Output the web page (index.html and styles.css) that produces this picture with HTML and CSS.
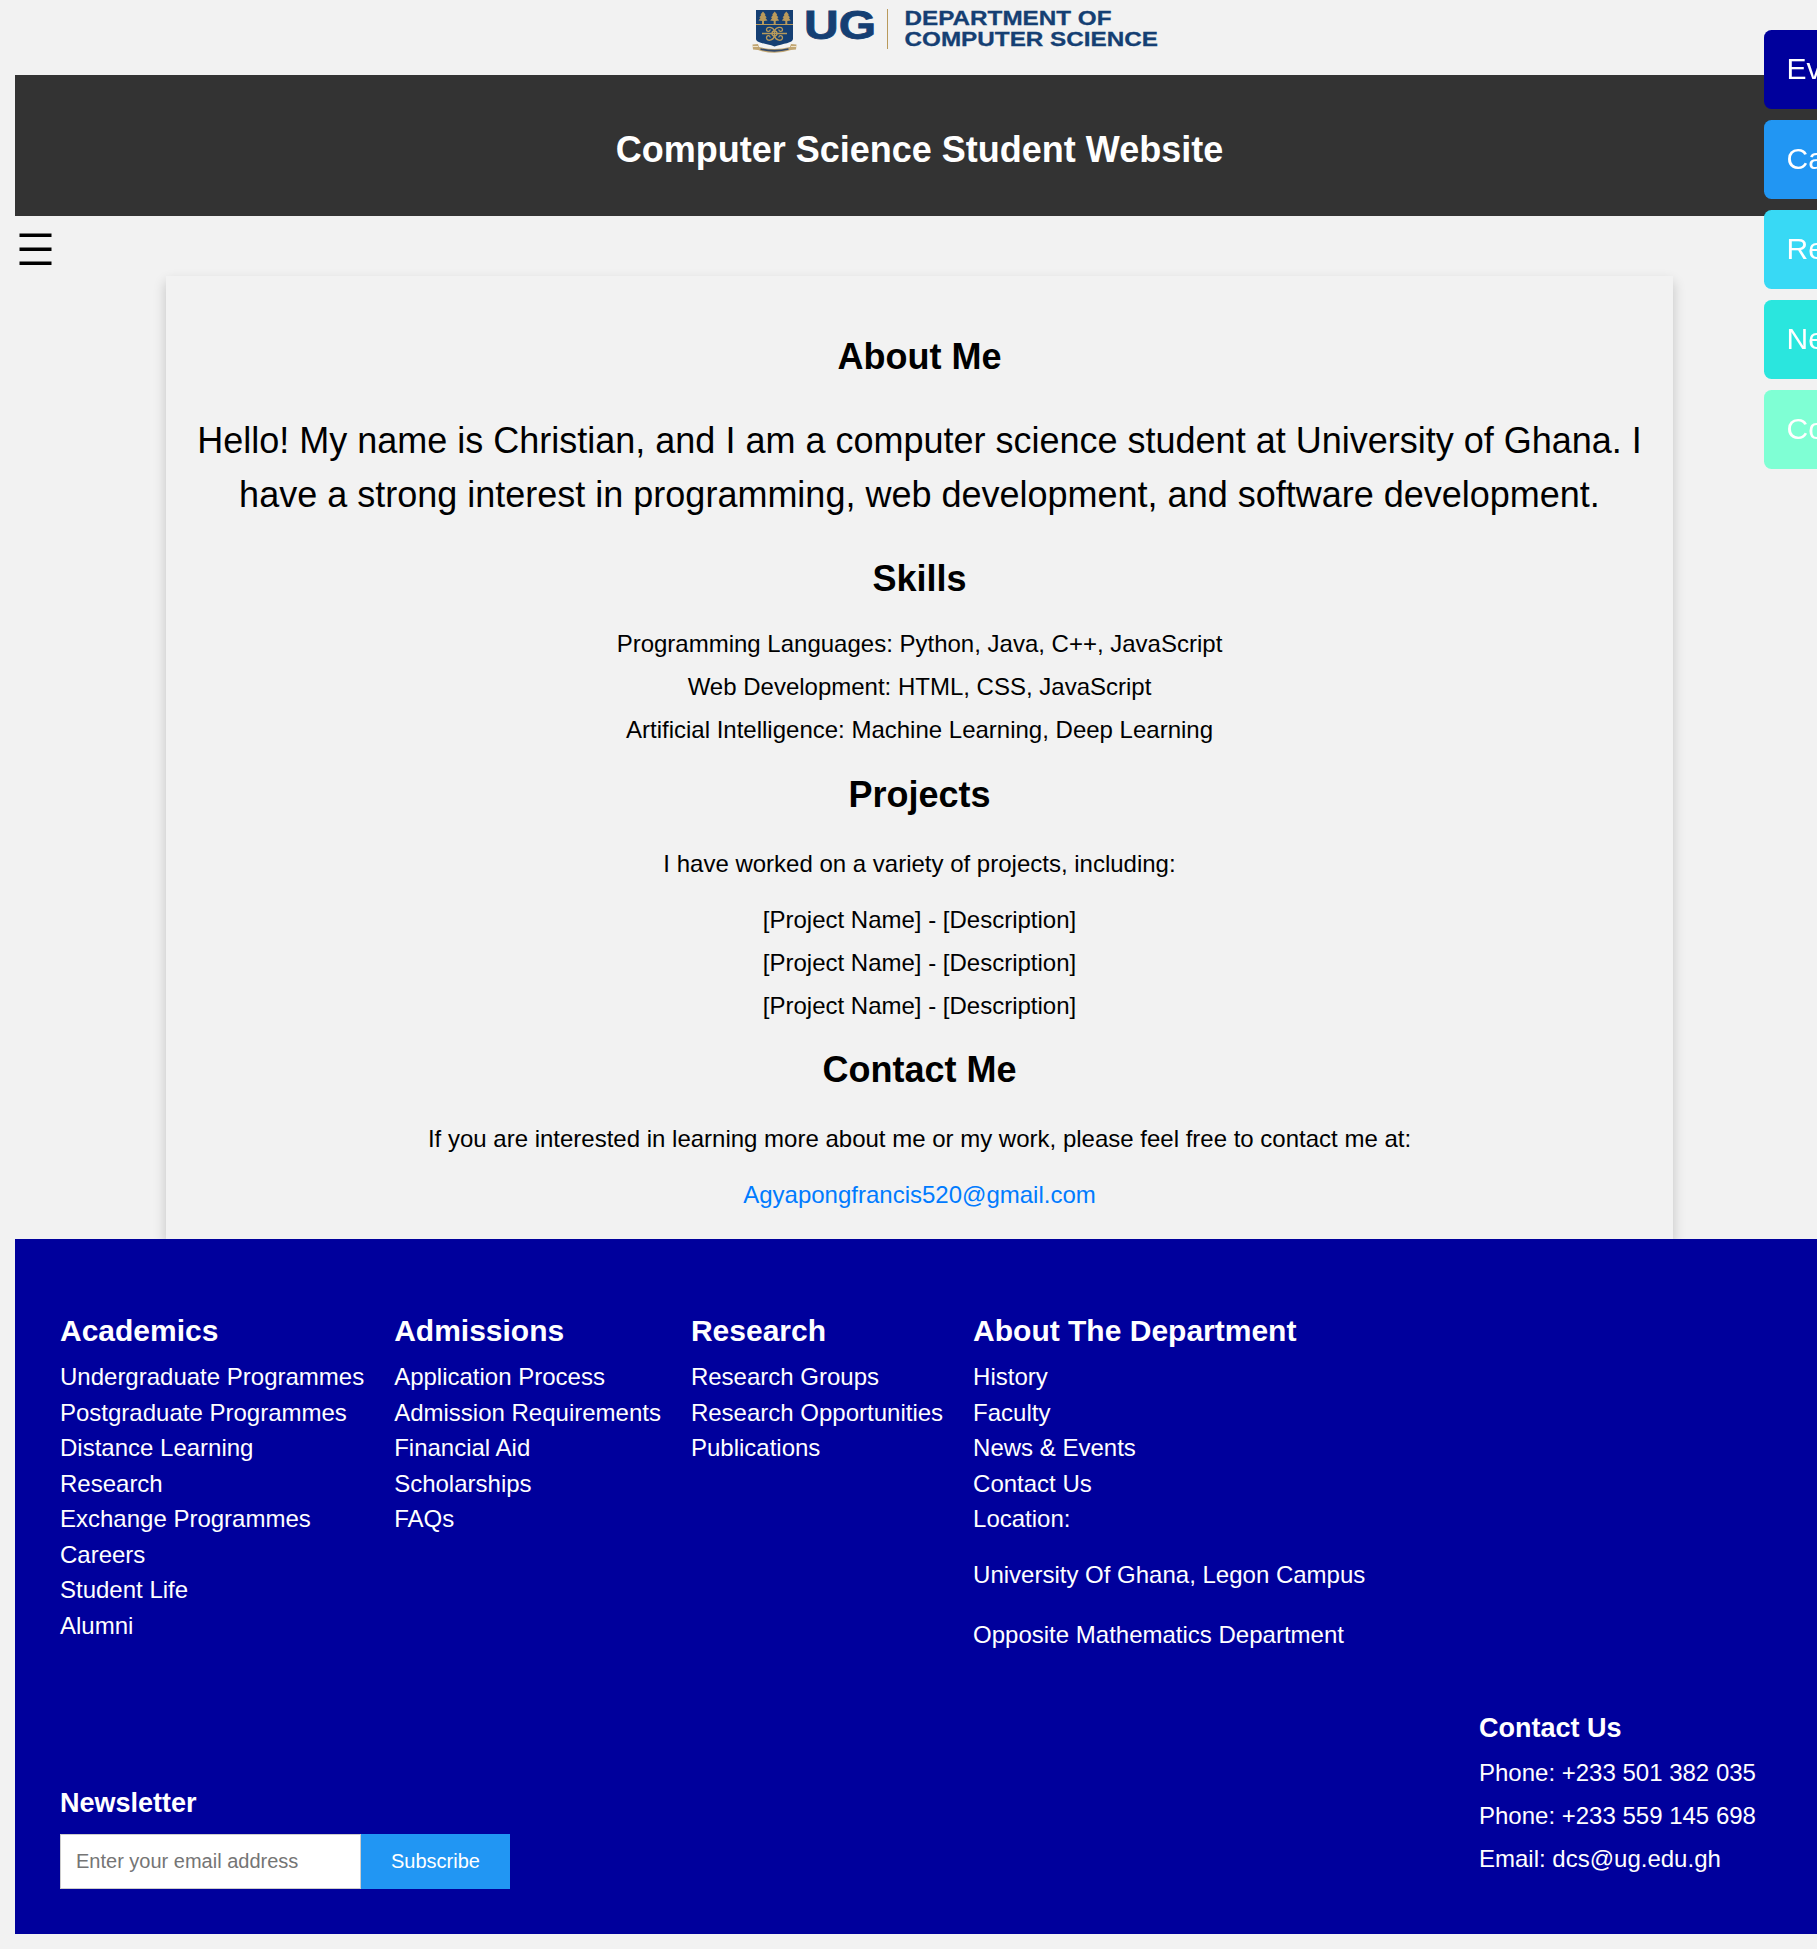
FILE: index.html
```html
<!DOCTYPE html>
<html lang="en">
<head>
<meta charset="utf-8">
<title>Computer Science Student Website</title>
<link rel="stylesheet" href="styles.css">
</head>
<body>
<div class="page">
  <div class="logo">
    <svg class="logo-art" width="430" height="60" viewBox="0 0 430 60" role="img" aria-label="UG Department of Computer Science">
      <path d="M16 10H53V39C53 43 43 43.500 34.500 46.500C26 43.500 16 43 16 39Z" fill="#153f73"/>
      <path d="M16 24.500H53" stroke="#b99a5b" stroke-width="1"/>
      <g fill="#b99a5b">
        <path id="tree" d="M23 11.500L25.500 14.500L24.800 15L26.700 17.500L25.500 18L27.500 20.500L24 21V24H22V21L18.500 20.500L20.500 18L19.300 17.500L21.200 15L20.500 14.500Z"/>
        <use href="#tree" x="11.700"/>
        <use href="#tree" x="23.300"/>
      </g>
      <g fill="none" stroke="#b99a5b" stroke-width="1.300">
        <path d="M22 33.500H47M34.500 30V37"/>
        <path d="M34.500 31C33 27 27 26 26.500 29.500C26.500 32 30.500 32 30 29.500M34.500 31C36 27 42 26 42.500 29.500C42.500 32 38.500 32 39 29.500M34.500 36C33 41 27 41.500 26.500 38C26.500 35 30.500 35 30 37.500M34.500 36C36 41 42 41.500 42.500 38C42.500 35 38.500 35 39 37.500"/>
        <circle cx="34.500" cy="33.500" r="2.500"/>
      </g>
      <path d="M12.500 44.500L18 44L19 47Q34.500 51 50 47L51 44L56.500 44.500L56 49.500L51 50Q34.500 55.500 18 50L13 49.500Z" fill="#c2a672"/>
      <path d="M12.500 46.500L18 46.500M51 46.500L56.500 46.500" stroke="#eee3cb" stroke-width="1"/>
      <path d="M20.500 49Q34.500 52.500 48.500 49" fill="none" stroke="#33496a" stroke-width="1.800"/>
      <path d="M147.500 9V49" stroke="#b99a5b" stroke-width="1"/>
      <g class="logo-text">
        <text x="64" y="39" font-size="40" textLength="72" lengthAdjust="spacingAndGlyphs" stroke-width=".8">UG</text>
        <text x="164.500" y="25" font-size="20.500" textLength="207" lengthAdjust="spacingAndGlyphs">DEPARTMENT OF</text>
        <text x="164.500" y="46" font-size="20.500" textLength="253.500" lengthAdjust="spacingAndGlyphs">COMPUTER SCIENCE</text>
      </g>
    </svg>
  </div>

  <header class="banner"><h1>Computer Science Student Website</h1></header>

  <div class="menu-bar">
    <svg class="menu-icon" width="33" height="34" viewBox="0 0 33 34" aria-label="Menu">
      <path d="M.5 3.300H32.500M.5 17.300H32.500M.5 31.200H32.500" stroke="#000" stroke-width="3.600"/>
    </svg>
  </div>

  <main class="card">
    <h2>About Me</h2>
    <p class="intro">Hello! My name is Christian, and I am a computer science student at University of Ghana. I have a strong interest in programming, web development, and software development.</p>
    <h2>Skills</h2>
    <ul class="items">
      <li>Programming Languages: Python, Java, C++, JavaScript</li>
      <li>Web Development: HTML, CSS, JavaScript</li>
      <li>Artificial Intelligence: Machine Learning, Deep Learning</li>
    </ul>
    <h2>Projects</h2>
    <p class="lead">I have worked on a variety of projects, including:</p>
    <ul class="items">
      <li>[Project Name] - [Description]</li>
      <li>[Project Name] - [Description]</li>
      <li>[Project Name] - [Description]</li>
    </ul>
    <h2>Contact Me</h2>
    <p class="lead">If you are interested in learning more about me or my work, please feel free to contact me at:</p>
    <a class="mail" href="#">Agyapongfrancis520@gmail.com</a>
  </main>

  <footer class="footer">
    <div class="columns">
      <div>
        <h3>Academics</h3>
        <ul>
          <li>Undergraduate Programmes</li>
          <li>Postgraduate Programmes</li>
          <li>Distance Learning</li>
          <li>Research</li>
          <li>Exchange Programmes</li>
          <li>Careers</li>
          <li>Student Life</li>
          <li>Alumni</li>
        </ul>
      </div>
      <div>
        <h3>Admissions</h3>
        <ul>
          <li>Application Process</li>
          <li>Admission Requirements</li>
          <li>Financial Aid</li>
          <li>Scholarships</li>
          <li>FAQs</li>
        </ul>
      </div>
      <div>
        <h3>Research</h3>
        <ul>
          <li>Research Groups</li>
          <li>Research Opportunities</li>
          <li>Publications</li>
        </ul>
      </div>
      <div>
        <h3>About The Department</h3>
        <ul>
          <li>History</li>
          <li>Faculty</li>
          <li>News &amp; Events</li>
          <li>Contact Us</li>
          <li>Location:</li>
        </ul>
        <p class="address">University Of Ghana, Legon Campus</p>
        <p class="address">Opposite Mathematics Department</p>
      </div>
    </div>
    <div class="lower">
      <div class="newsletter">
        <h4>Newsletter</h4>
        <form class="signup">
          <input type="email" placeholder="Enter your email address">
          <button type="button">Subscribe</button>
        </form>
      </div>
      <div class="contact">
        <h4>Contact Us</h4>
        <ul class="items">
          <li>Phone: +233 501 382 035</li>
          <li>Phone: +233 559 145 698</li>
          <li>Email: dcs@ug.edu.gh</li>
        </ul>
      </div>
    </div>
  </footer>
</div>

<nav class="side-nav">
  <a class="events" href="#">Events</a>
  <a class="calendar" href="#">Calendar</a>
  <a class="resources" href="#">Resources</a>
  <a class="news" href="#">News</a>
  <a class="contact-link" href="#">Contact</a>
</nav>
</body>
</html>
```

FILE: styles.css
```css
* { box-sizing: border-box; }

html { overflow: hidden; }

body {
  margin: 0;
  background: #f2f2f2;
  color: #000;
  font-family: "Liberation Sans", Arial, sans-serif;
  font-size: 24px;
  line-height: 36px;
}

h1, h2, h3, h4, p, ul { margin: 0; padding: 0; }
ul { list-style: none; }
a { text-decoration: none; }

.page { width: 1809px; margin-left: 15px; padding-bottom: 15px; }

.logo { height: 75px; padding-left: 725px; }
.logo-art { display: block; }
.logo-text { fill: #153f73; stroke: #153f73; stroke-width: .3px; font-weight: bold; }

.banner {
  height: 141px;
  padding-top: 48px;
  background: #333;
  color: #fff;
  text-align: center;
}
.banner h1 { font-size: 36px; line-height: 54px; }

.menu-bar { height: 60px; padding: 16px 0 0 4px; }
.menu-icon { display: block; }

.card {
  width: 1507px;
  height: 963px;
  margin: 0 auto;
  padding: 60px 30px 0;
  text-align: center;
  box-shadow: 0 6px 12px rgba(0, 0, 0, .2);
}
.card h2 { font-size: 36px; line-height: 42px; }
.intro { margin: 36px 0 36px; font-size: 36px; line-height: 54px; }
.items li + li { margin-top: 7px; }
.card .items { margin: 26px 0; }
.lead { margin-top: 30px; }
.card .lead + .items { margin: 20px 0 25px; }
.mail { display: block; margin-top: 20px; color: #007bff; }

.footer {
  position: relative;
  height: 695px;
  padding: 69px 45px 45px;
  background: #00009c;
  color: #fff;
}
.columns { display: flex; gap: 30px; height: 397px; }
.columns h3 { font-size: 30px; line-height: 45px; margin-bottom: 6px; }
.columns li { line-height: 35.5px; }
.address { margin-top: 20px; }
.address + .address { margin-top: 24px; }

.lower { display: flex; justify-content: space-between; align-items: flex-start; }
.lower h4 { font-size: 27px; line-height: 41px; }
.newsletter { padding-top: 78px; }
.signup { display: flex; margin-top: 10px; }
.signup input {
  width: 301px;
  height: 55px;
  padding: 0 15px;
  border: 1px solid #ccc;
  border-radius: 0;
  background: #fff;
  font: 20px "Liberation Sans", Arial, sans-serif;
}
.signup input::placeholder { color: #757575; }
.signup button {
  width: 149px;
  height: 55px;
  border: 0;
  background: #2196f3;
  color: #fff;
  font: 20px "Liberation Sans", Arial, sans-serif;
}
.contact { width: 300px; padding-top: 3px; }
.contact .items { margin-top: 6px; }

.side-nav {
  position: fixed;
  top: 30px;
  left: 1764px;
  display: flex;
  flex-direction: column;
  gap: 11px;
  width: 195px;
}
.side-nav a {
  height: 79px;
  padding-left: 22.5px;
  border-radius: 7.5px;
  color: #fff;
  font-size: 30px;
  line-height: 77px;
}
.events { background: #00009c; }
.calendar { background: #2196f3; }
.resources { background: #38d9f5; }
.news { background: #2ae6de; }
.contact-link { background: #7fffd4; }
```
